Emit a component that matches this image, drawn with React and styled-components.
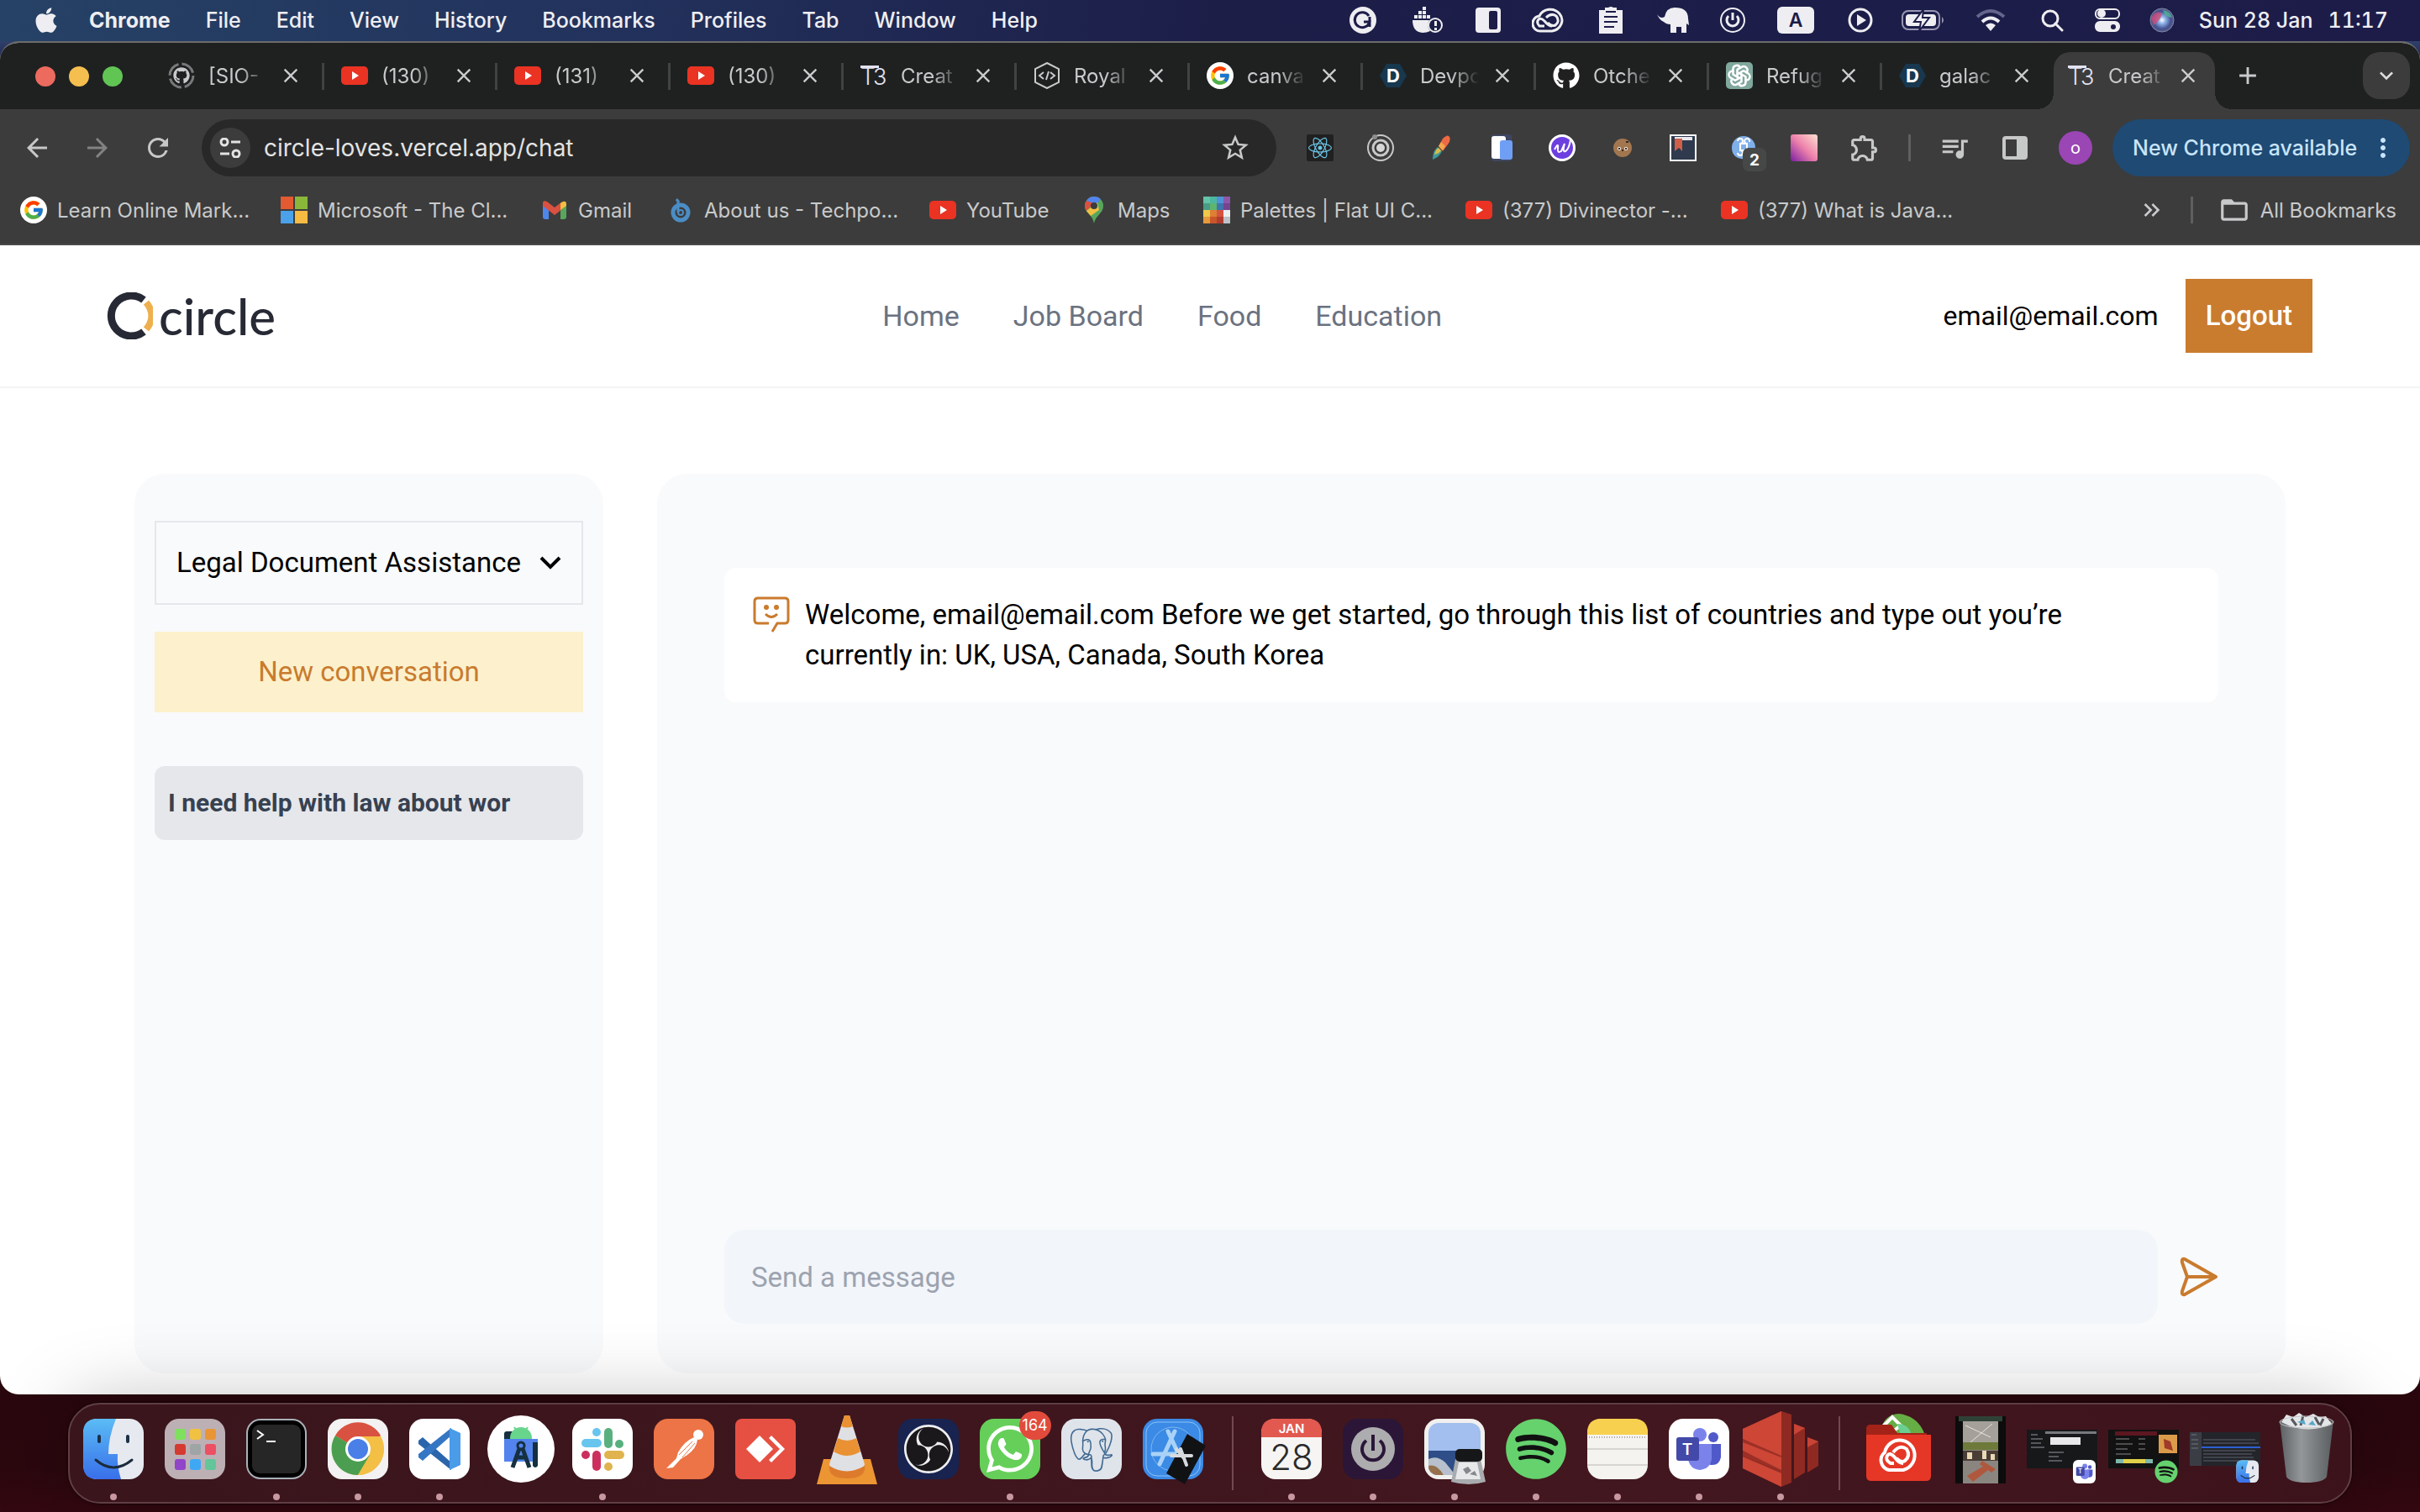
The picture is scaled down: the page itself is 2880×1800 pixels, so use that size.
import styled, { createGlobalStyle } from 'styled-components'
import { FaApple, FaGithub, FaReact, FaWhatsapp, FaSpotify } from 'react-icons/fa'
import { FcGoogle } from 'react-icons/fc'
import { SiPostgresql, SiObsstudio } from 'react-icons/si'
import { TbBrandOpenai } from 'react-icons/tb'
import {
  MdArrowBack,
  MdArrowForward,
  MdRefresh,
  MdStarOutline,
  MdMoreVert,
  MdClose,
  MdAdd,
  MdFolderOpen,
  MdQueueMusic,
  MdOutlineExtension,
  MdKeyboardArrowDown,
  MdKeyboardDoubleArrowRight,
} from 'react-icons/md'

const GlobalStyle = createGlobalStyle`
  * {
    box-sizing: border-box;
  }
  body {
    margin: 0;
    font-family: Inter, 'Noto Sans', sans-serif;
  }
  button, input, select {
    font: inherit;
    color: inherit;
    border: 0;
    padding: 0;
    margin: 0;
    background: none;
  }
  button {
    cursor: pointer;
  }
  a {
    color: inherit;
    text-decoration: none;
  }
  svg {
    display: block;
    flex: none;
  }
`

const Desktop = styled.div`
  min-height: 100vh;
  display: flex;
  flex-direction: column;
  background: linear-gradient(180deg, #4d78a8 0, #1c1d45 80px, #1c0509 60%, #2b070e 97%, #340810 100%);
`

/* menu bar */

const MenuBar = styled.header`
  height: 49px;
  padding: 0 38px 2px 38px;
  display: flex;
  align-items: center;
  justify-content: space-between;
  color: #eeeef2;
  font-size: 25px;
  font-weight: 500;
  white-space: nowrap;
  background: linear-gradient(90deg, #264266 0%, #22325c 25%, #1c1e48 50%, #1d1c49 100%);
`
const Menus = styled.nav`
  display: flex;
  align-items: center;
  gap: 42px;
`
const AppleMenu = styled.button`
  margin-right: -8px;
`
const MenuItem = styled.button`
  font-weight: ${props => (props.$bold ? 700 : 500)};
`
const StatusIcons = styled.div`
  display: flex;
  align-items: center;
`
const StatusIcon = styled.span`
  width: ${props => props.$w}px;
  display: flex;
  justify-content: center;
`
const Clock = styled.time`
  display: flex;
  gap: 18px;
  margin-left: 14px;
  font-variant-numeric: tabular-nums;
`

/* browser */

const Browser = styled.section`
  flex: 1;
  display: flex;
  flex-direction: column;
  overflow: hidden;
  border-top: 2px solid #6b6c6c;
  border-radius: 22px;
  background: #fff;
`
const TabStrip = styled.div`
  height: 79px;
  padding: 0 12px 0 42px;
  display: flex;
  align-items: flex-end;
  background: #1f2121;
`
const Lights = styled.div`
  height: 78px;
  width: 136px;
  display: flex;
  align-items: center;
  gap: 16px;
`
const Light = styled.span`
  width: 24px;
  height: 24px;
  border-radius: 50%;
  background: ${props => props.$color};
`
const Tab = styled.div`
  position: relative;
  flex: 0 1 ${props => (props.$active ? 192 : 206)}px;
  height: 68px;
  padding: 0 ${props => (props.$active ? '18px 12px 17px' : '24px 12px 22px')};
  display: flex;
  align-items: center;
  color: #c9cacb;
  font-size: 24px;
  background: ${props => (props.$active ? '#3c3c3c' : 'none')};
  border-radius: 20px 20px 0 0;

  &::before, &::after {
    content: '';
    display: ${props => (props.$active ? 'block' : 'none')};
    position: absolute;
    bottom: 0;
    width: 20px;
    height: 20px;
  }
  &::before {
    left: -20px;
    background: radial-gradient(circle at 0 0, transparent 20px, #3c3c3c 20px);
  }
  &::after {
    right: -20px;
    background: radial-gradient(circle at 100% 0, transparent 20px, #3c3c3c 20px);
  }
`
const TabTitle = styled.span`
  margin-left: 16px;
  width: 78px;
  margin-right: -14px;
  white-space: nowrap;
  mask-image: linear-gradient(90deg, #000 38px, transparent 70px);
`
const TabClose = styled.button`
  margin-left: auto;
`
const TabEdge = styled.span`
  position: absolute;
  right: -2px;
  top: 13px;
  width: 3px;
  height: 32px;
  background: #414343;
`
const NewTab = styled.button`
  height: 68px;
  padding: 0 0 12px 22px;
  color: #c9cacb;
`
const TabSearch = styled.button`
  width: 56px;
  height: 56px;
  margin: 0 0 12px auto;
  display: grid;
  place-items: center;
  border-radius: 20px;
  color: #dcdddd;
  background: #3c3c3c;
`
const Toolbar = styled.div`
  height: 92px;
  padding: 0 12px 0 24px;
  display: flex;
  align-items: center;
  gap: 32px;
  color: #c7c8c8;
  background: #3c3c3c;
`
const IconButton = styled.button`
  width: 40px;
  display: flex;
  justify-content: center;
  opacity: ${props => (props.disabled ? 0.5 : 1)};
`
const Omnibox = styled.label`
  flex: 1;
  height: 68px;
  padding: 0 30px 0 10px;
  display: flex;
  align-items: center;
  gap: 16px;
  border-radius: 34px;
  color: #c7c8c8;
  background: #282828;
`
const SiteInfo = styled.span`
  width: 48px;
  height: 48px;
  display: grid;
  place-items: center;
  border-radius: 50%;
  background: #3c3c3c;
`
const Address = styled.input`
  flex: 1;
  min-width: 0;
  outline: 0;
  color: #e3e3e3;
  font-size: 28px;
`
const Extensions = styled.div`
  display: flex;
  align-items: center;
  gap: 40px;
  padding: 0 4px;
`
const ExtButton = styled.button`
  width: 32px;
  height: 32px;
  display: flex;
  justify-content: ${props => (props.$badge ? 'flex-start' : 'center')};
  align-items: ${props => (props.$badge ? 'flex-start' : 'center')};
`
const Rule = styled.span`
  width: 3px;
  height: 32px;
  background: #5e5f5f;
`
const Account = styled.div`
  display: flex;
  align-items: center;
  gap: 24px;
`
const Avatar = styled.button`
  width: 40px;
  height: 40px;
  border-radius: 50%;
  color: #fff;
  font-size: 20px;
  line-height: 36px;
  background: #9a46b4;
`
const UpdateButton = styled.button`
  width: 354px;
  height: 68px;
  padding: 0 14px 0 24px;
  display: flex;
  align-items: center;
  justify-content: space-between;
  border-radius: 34px;
  color: #c8e4fb;
  font-size: 25px;
  font-weight: 500;
  white-space: nowrap;
  background: #1f4a73;
`
const Bookmarks = styled.nav`
  height: 70px;
  padding: 0 28px 12px 24px;
  display: flex;
  align-items: center;
  gap: 42px;
  color: #c9cacb;
  font-size: 24px;
  background: #3c3c3c;
  border-bottom: 2px solid #4a4848;
`
const Bookmark = styled.a`
  display: flex;
  align-items: center;
  gap: 12px;
  white-space: nowrap;
`
const BookmarkText = styled.span`
  width: ${props => props.$w}px;
`
const BookmarksEnd = styled.div`
  margin-left: auto;
  display: flex;
  align-items: center;
  gap: 30px;
`

/* circle site */

const Site = styled.div`
  flex: 1;
  display: flex;
  flex-direction: column;
  color: #000;
  font-family: Roboto, 'Noto Sans', sans-serif;
  font-size: 33px;
  line-height: 48px;
`
const SiteHeader = styled.header`
  height: 170px;
  padding: 0 128px 0 126px;
  display: flex;
  align-items: center;
  justify-content: space-between;
  border-bottom: 2px solid #f3f4f6;
`
const Logo = styled.a`
  width: 328px;
  display: flex;
  align-items: center;
  gap: 7px;
  color: #272a35;
  font-family: Lato, sans-serif;
  font-size: 60px;
  font-weight: 500;
`
const SiteNav = styled.nav`
  display: flex;
  gap: 64px;
  color: #6b7280;
  font-size: 34px;
`
const Session = styled.div`
  display: flex;
  align-items: center;
  gap: 32px;
`
const Email = styled.span`
  font-size: 32px;
`
const Logout = styled.button`
  height: 88px;
  padding: 0 24px;
  color: #fff;
  font-weight: 500;
  background: #c97b2e;
`
const Main = styled.main`
  flex: 1;
  padding: 102px 160px 25px;
  display: flex;
  gap: 64px;
`
const Sidebar = styled.aside`
  width: 558px;
  padding: 56px 24px;
  display: flex;
  flex-direction: column;
  border-radius: 36px;
  background: #f9fafc;
`
const TopicPicker = styled.label`
  height: 100px;
  padding: 0 24px;
  display: flex;
  align-items: center;
  border: 2px solid #e5e7eb;
`
const TopicSelect = styled.select`
  flex: 1;
  min-width: 0;
  appearance: none;
  outline: 0;
  height: 60px;
`
const NewConversation = styled.button`
  height: 96px;
  margin-top: 32px;
  color: #c97b2e;
  background: #fcf1cc;
`
const Conversation = styled.button`
  height: 88px;
  margin-top: 64px;
  padding: 0 16px;
  border-radius: 12px;
  color: #374151;
  font-size: 30px;
  font-weight: 700;
  text-align: left;
  background: #e5e7eb;
`
const Chat = styled.section`
  flex: 1;
  padding: 112px 80px 59px;
  display: flex;
  flex-direction: column;
  justify-content: space-between;
  border-radius: 36px;
  background: #f9fafc;
`
const Message = styled.article`
  padding: 32px;
  display: flex;
  gap: 16px;
  border-radius: 14px;
  background: #fff;

  p {
    margin: 0;
  }
`
const Composer = styled.form`
  display: flex;
  align-items: center;
  gap: 24px;
`
const MessageInput = styled.input`
  flex: 1;
  height: 112px;
  padding: 0 32px;
  border-radius: 24px;
  background: #f2f5fa;

  &::placeholder {
    color: #9ca3af;
    opacity: 1;
  }
`

/* dock */

const DockArea = styled.footer`
  padding: 10px 81px;
`
const Dock = styled.div`
  position: relative;
  height: 120px;
  padding: 0 4px;
  display: flex;
  border: 2px solid #603d44;
  border-radius: 38px;
  background: linear-gradient(90deg, #3a151c, #43171f 70%, #3d131b);
  box-shadow: 0 0 3px #000, 0 0 90px rgba(0, 0, 0, 0.26);
`
const DockGroup = styled.div`
  display: contents;
`
const DockApp = styled.button`
  position: relative;
  flex: 1;
  min-width: 0;
  padding-top: 5px;
  display: flex;
  flex-direction: column;
  align-items: center;
  gap: 5px;
`
const RunningDot = styled.span`
  width: 8px;
  height: 8px;
  border-radius: 50%;
  background: #c898a1;
`
const DockLine = styled.span`
  width: 2px;
  height: 88px;
  margin: 14px 21px;
  background: #74484f;
`
const Badge = styled.span`
  position: absolute;
  top: 8px;
  right: 0;
  width: 38px;
  height: 34px;
  border-radius: 17px;
  color: #fff;
  font-size: 18px;
  line-height: 34px;
  background: #e24b3c;
`

/* small icons */

const GoogleIcon = () => (
  <svg width="32" height="32" viewBox="0 0 32 32">
    <circle cx="16" cy="16" r="16" fill="#fff" />
    <FcGoogle x="3" y="3" size={26} />
  </svg>
)
const YouTubeIcon = () => (
  <svg width="32" height="32" viewBox="0 0 32 32">
    <rect y="5" width="32" height="22" rx="5" fill="#ea3323" />
    <path d="M13 11l8 5-8 5z" fill="#fff" />
  </svg>
)
const GithubRing = () => (
  <svg width="32" height="32" viewBox="0 0 32 32" fill="none">
    <circle cx="16" cy="16" r="14" stroke="#77797a" strokeWidth="3" strokeDasharray="18 4" />
    <FaGithub x="6" y="6" size={20} color="#c9cacb" />
  </svg>
)
const T3Icon = () => (
  <svg width="32" height="32" viewBox="0 0 32 32" fill="#e3e3f3">
    <path d="M0 4h22v3H0z" />
    <text x="0" y="27" fontFamily="Inter" fontSize="28" fontWeight="300">T</text>
    <text x="15" y="27" fontFamily="Inter" fontSize="27" fontWeight="300">3</text>
  </svg>
)
const RoyalIcon = () => (
  <svg width="32" height="32" viewBox="0 0 32 32" fill="none" stroke="#c9cacb" strokeWidth="2">
    <path d="M16 1l14 7v16l-14 7-14-7V8zM12 12l-5 4 5 4M20 12l5 4-5 4M15 21l3-10" />
  </svg>
)
const DevpostIcon = () => (
  <svg width="32" height="32" viewBox="0 0 32 32">
    <path d="M8 2h16l8 14-8 14H8L0 16z" fill="#17384f" />
    <text x="16" y="24" textAnchor="middle" fontFamily="Inter" fontSize="22" fontWeight="700" fill="#fff">D</text>
  </svg>
)
const OpenAiIcon = () => (
  <svg width="32" height="32" viewBox="0 0 32 32">
    <rect width="32" height="32" rx="5" fill="#80a89c" />
    <TbBrandOpenai x="1" y="1" size={30} color="#fff" />
  </svg>
)
const MicrosoftIcon = () => (
  <svg width="32" height="32" viewBox="0 0 32 32">
    <path d="M0 0h15v15H0z" fill="#e25a32" />
    <path d="M17 0h15v15H17z" fill="#8ab73a" />
    <path d="M0 17h15v15H0z" fill="#4ba2ea" />
    <path d="M17 17h15v15H17z" fill="#f6bb43" />
  </svg>
)
const GmailIcon = () => (
  <svg width="32" height="32" viewBox="0 0 32 32">
    <path d="M2 10v14q0 3 3 3h4V13z" fill="#4f86ec" />
    <path d="M30 10v14q0 3-3 3h-4V13z" fill="#58a65c" />
    <path d="M2 8q0-4 5-2l9 7 9-7v9l-9 7-9-7-5-4z" fill="#d95140" />
    <path d="M23 8l3-2q4-1 4 3v2l-7 5z" fill="#f1bf42" />
  </svg>
)
const TechpointIcon = () => (
  <svg width="32" height="32" viewBox="0 0 32 32" fill="none" stroke="#4b8dc5">
    <circle cx="16" cy="19" r="9" strokeWidth="5" />
    <circle cx="16" cy="19" r="3" strokeWidth="2" />
    <path d="M13 19V6M11 3l3 4" strokeWidth="3" />
  </svg>
)
const MapsIcon = () => (
  <svg width="32" height="32" viewBox="0 0 32 32">
    <path d="M16 0a11 11 0 0 1 11 11c0 9-9 11-11 21C14 21 5 20 5 11A11 11 0 0 1 16 0z" fill="#58a65c" />
    <path d="M16 0A11 11 0 0 0 7 5l9 8 8-10a11 11 0 0 0-8-3z" fill="#5383ec" />
    <path d="M7 5q-4 6 0 12l9-9z" fill="#d95140" />
    <path d="M7 17l13-10 2 9-10 7z" fill="#f1bf42" />
    <circle cx="16" cy="11" r="4" fill="#3c3c3c" />
  </svg>
)
const paletteColors = [
  '#65c3a6', '#4bb7a0', '#4f93d4', '#8c57a9',
  '#4a9c86', '#5db56e', '#3f76ad', '#76438f',
  '#efc94c', '#dd7f34', '#d5543f', '#ecf0f1',
  '#e79a3b', '#c9562a', '#b23d2f', '#bdc3c7',
]
const PaletteIcon = () => (
  <svg width="32" height="32" viewBox="0 0 32 32">
    {paletteColors.map((color, i) => (
      <rect key={i} x={(i % 4) * 8} y={Math.floor(i / 4) * 8} width="8" height="8" fill={color} />
    ))}
  </svg>
)

const tabs = [
  { title: '[SIO-', icon: <GithubRing /> },
  { title: '(130)', icon: <YouTubeIcon /> },
  { title: '(131)', icon: <YouTubeIcon /> },
  { title: '(130)', icon: <YouTubeIcon /> },
  { title: 'Creat', icon: <T3Icon /> },
  { title: 'Royal', icon: <RoyalIcon /> },
  { title: 'canva', icon: <GoogleIcon /> },
  { title: 'Devpo', icon: <DevpostIcon /> },
  { title: 'Otche', icon: <FaGithub size={32} color="#fff" /> },
  { title: 'Refug', icon: <OpenAiIcon /> },
  { title: 'galac', icon: <DevpostIcon /> },
  { title: 'Creat', icon: <T3Icon />, active: true },
]

const bookmarks = [
  { text: 'Learn Online Mark...', w: 224, icon: <GoogleIcon /> },
  { text: 'Microsoft - The Cl...', w: 224, icon: <MicrosoftIcon /> },
  { text: 'Gmail', w: 64, icon: <GmailIcon /> },
  { text: 'About us - Techpo...', w: 226, icon: <TechpointIcon /> },
  { text: 'YouTube', w: 94, icon: <YouTubeIcon /> },
  { text: 'Maps', w: 60, icon: <MapsIcon /> },
  { text: 'Palettes | Flat UI C...', w: 226, icon: <PaletteIcon /> },
  { text: '(377) Divinector -...', w: 218, icon: <YouTubeIcon /> },
  { text: '(377) What is Java...', w: 230, icon: <YouTubeIcon /> },
]

const extensions = [
  {
    name: 'React Developer Tools',
    icon: (
      <svg width="32" height="32" viewBox="0 0 32 32">
        <rect width="32" height="32" rx="2" fill="#202020" />
        <FaReact x="2" y="2" size={28} color="#6cc5e8" />
      </svg>
    ),
  },
  {
    name: 'Orbit',
    icon: (
      <svg width="32" height="32" viewBox="0 0 32 32" fill="none" stroke="#c7c8c8" strokeWidth="2">
        <circle cx="16" cy="16" r="15" />
        <circle cx="16" cy="16" r="9" strokeWidth="3" />
        <circle cx="16" cy="16" r="5" fill="#d6d6d6" stroke="none" />
        <circle cx="9" cy="3" r="3" fill="#8c8d8d" stroke="none" />
      </svg>
    ),
  },
  {
    name: 'Brush',
    icon: (
      <svg width="32" height="32" viewBox="0 0 32 32">
        <path d="M6 30q0-11 6-15l5 5q-3 7-11 10z" fill="#3e9a9a" />
        <path d="M8 24q2-7 5-8l3 3q-2 4-8 5z" fill="#d6b94b" />
        <path d="M13 14l5-9q6-6 8-2t-2 9l-6 8z" fill="#ee6a45" />
        <path d="M13 14l3-5 5 5-3 5z" fill="#f3a64a" />
      </svg>
    ),
  },
  {
    name: 'Devices',
    icon: (
      <svg width="32" height="32" viewBox="0 0 32 32">
        <rect x="4" y="0" width="24" height="32" rx="3" fill="#3f4660" />
        <rect x="4" y="2" width="17" height="27" rx="3" fill="#fff" />
        <rect x="14" y="7" width="15" height="23" rx="3" fill="#6f9ff5" />
      </svg>
    ),
  },
  {
    name: 'Writer',
    icon: (
      <svg width="32" height="32" viewBox="0 0 32 32">
        <circle cx="16" cy="16" r="16" fill="#fff" />
        <circle cx="16" cy="16" r="13" fill="#6d3fe0" />
        <path d="M7 18q5-9 4-2t4 4l4-9q-3 11 1 9t6-13" fill="none" stroke="#fff" strokeWidth="2" />
      </svg>
    ),
  },
  {
    name: 'Cookies',
    icon: (
      <svg width="32" height="32" viewBox="0 0 32 32">
        <circle cx="16" cy="16" r="11" fill="#a27750" />
        <circle cx="12" cy="17" r="2" fill="#fff" />
        <circle cx="20" cy="17" r="2" fill="#fff" />
        <path d="M12 16v2M20 16v2M15 19h2M20 9h3" stroke="#3a261a" strokeWidth="2" />
      </svg>
    ),
  },
  {
    name: 'Reading list',
    icon: (
      <svg width="32" height="32" viewBox="0 0 32 32">
        <rect x="1" y="1" width="30" height="30" fill="#2f3a4e" stroke="#fff" strokeWidth="2" />
        <path d="M6 3h21v4H6z" fill="#e9e9ee" />
        <path d="M6 5h9v15l-4-4-5 4z" fill="#cf5f49" />
      </svg>
    ),
  },
  {
    name: 'Shortcuts',
    badge: true,
    icon: (
      <svg width="44" height="44" viewBox="0 0 44 44">
        <path d="M2 16a14 14 0 0 1 28 0q0 8-8 11-9 5-16-1-4-4-4-10z" fill="#7fb0ea" />
        <path d="M12 19h8v-8h-8zM12 11a3 3 0 1 0-3-3M20 11a3 3 0 1 1 3-2M12 19a3 3 0 1 1-3 3" fill="none" stroke="#fff" strokeWidth="2" />
        <rect x="15" y="16" width="28" height="28" rx="7" fill="#464848" />
        <text x="29" y="37" textAnchor="middle" fontFamily="Inter" fontSize="19" fontWeight="700" fill="#fff">2</text>
      </svg>
    ),
  },
  {
    name: 'Gradients',
    icon: (
      <svg width="32" height="32" viewBox="0 0 32 32">
        <defs>
          <linearGradient id="pinks" x1="0" y1="1" x2="1" y2="0">
            <stop offset="0" stopColor="#7b1fa2" />
            <stop offset="0.5" stopColor="#ee82ab" />
            <stop offset="1" stopColor="#fde2d0" />
          </linearGradient>
        </defs>
        <rect width="32" height="32" rx="3" fill="url(#pinks)" />
      </svg>
    ),
  },
  { name: 'Extensions', icon: <MdOutlineExtension size={38} /> },
]

const statusIcons = [
  {
    name: 'Grammarly',
    w: 78,
    icon: (
      <svg width="32" height="32" viewBox="0 0 32 32">
        <circle cx="16" cy="16" r="16" fill="#eeeef2" />
        <path d="M23 11a9 9 0 1 0 1 7h-7M24 12v12" fill="none" stroke="#1d1c49" strokeWidth="3" />
      </svg>
    ),
  },
  {
    name: 'Docker',
    w: 76,
    icon: (
      <svg width="40" height="32" viewBox="0 0 40 32" fill="#eeeef2">
        <path d="M2 16h20q-4 7 1 13-4 2-9 2Q2 30 2 16zM4 10h4v4H4zM9 10h4v4H9zM14 10h4v4h-4zM9 5h4v4H9zM14 5h4v4h-4zM14 0h4v4h-4zM19 10h4v4h-4z" />
        <circle cx="29" cy="22" r="8" fill="none" stroke="#eeeef2" strokeWidth="2" />
        <path d="M28 17h3v6h-3zM28 25h3v3h-3z" />
      </svg>
    ),
  },
  {
    name: 'Panels',
    w: 68,
    icon: (
      <svg width="30" height="30" viewBox="0 0 30 30">
        <rect width="30" height="30" rx="4" fill="#eeeef2" />
        <rect x="16" y="4" width="10" height="22" rx="2" fill="#1d1c49" />
      </svg>
    ),
  },
  {
    name: 'Creative Cloud',
    w: 74,
    icon: (
      <svg width="38" height="30" viewBox="0 0 38 30" fill="none" stroke="#eeeef2" strokeWidth="3">
        <path d="M11 28a9 9 0 0 1-2-18A14 13 0 1 1 24 28z" />
        <path d="M24 22q-4 0-9-6-4-4-7-2-3 4 1 8h6M17 12q6-6 12-2 5 6-1 11-5 2-9-3" />
      </svg>
    ),
  },
  {
    name: 'Clipboard',
    w: 76,
    icon: (
      <svg width="28" height="32" viewBox="0 0 28 32">
        <path d="M0 4h7V1h4q3-2 6 0h4v3h7v28H0z" fill="#eeeef2" />
        <path d="M6 12h16M6 18h16M6 24h12M8 6h12" stroke="#1d1c49" strokeWidth="2" />
      </svg>
    ),
  },
  {
    name: 'TablePlus',
    w: 72,
    icon: (
      <svg width="40" height="32" viewBox="0 0 40 32" fill="#eeeef2">
        <path d="M1 9q4 6 9 3Q12 1 22 1q16 0 16 13l1 8-3-2v11h-6v-7h-6v7h-7V21q-5 0-8-3-5-2-8-9z" />
      </svg>
    ),
  },
  {
    name: 'Power',
    w: 70,
    icon: (
      <svg width="32" height="32" viewBox="0 0 32 32" fill="none" stroke="#eeeef2" strokeWidth="3">
        <circle cx="16" cy="16" r="14" strokeWidth="2" />
        <path d="M16 7v9M11 11a7 7 0 1 0 10 0" />
      </svg>
    ),
  },
  {
    name: 'Input source',
    w: 80,
    icon: (
      <svg width="44" height="32" viewBox="0 0 44 32">
        <rect width="44" height="32" rx="6" fill="#eeeef2" />
        <text x="22" y="24" textAnchor="middle" fontFamily="Inter" fontSize="23" fontWeight="600" fill="#1d1c49">A</text>
      </svg>
    ),
  },
  {
    name: 'Now playing',
    w: 74,
    icon: (
      <svg width="30" height="30" viewBox="0 0 30 30" fill="#eeeef2">
        <circle cx="15" cy="15" r="13" fill="none" stroke="#eeeef2" strokeWidth="3" />
        <path d="M11 8l11 7-11 7z" />
      </svg>
    ),
  },
  {
    name: 'Battery',
    w: 76,
    icon: (
      <svg width="52" height="28" viewBox="0 0 52 28">
        <rect x="1" y="3" width="44" height="22" rx="7" fill="none" stroke="#9796b4" strokeWidth="2" />
        <path d="M48 10q4 4 0 8z" fill="#9796b4" />
        <rect x="5" y="7" width="36" height="14" rx="4" fill="#eeeef2" />
        <path d="M26 1L15 16h8l-2 11 12-16h-8z" fill="#eeeef2" stroke="#1d1c49" strokeWidth="2" />
      </svg>
    ),
  },
  {
    name: 'Wi-Fi',
    w: 84,
    icon: (
      <svg width="36" height="28" viewBox="0 0 36 28" fill="none" strokeWidth="4">
        <path d="M2 10q16-14 32 0" stroke="#65648d" />
        <path d="M8 16q10-9 20 0" stroke="#eeeef2" />
        <path d="M12 20q6-5 12 0l-6 7z" fill="#eeeef2" />
      </svg>
    ),
  },
  {
    name: 'Search',
    w: 62,
    icon: (
      <svg width="28" height="28" viewBox="0 0 28 28" fill="none" stroke="#eeeef2" strokeWidth="3">
        <circle cx="12" cy="12" r="9" />
        <path d="M18 18l8 8" strokeLinecap="round" />
      </svg>
    ),
  },
  {
    name: 'Control Center',
    w: 70,
    icon: (
      <svg width="30" height="28" viewBox="0 0 30 28" fill="none" stroke="#eeeef2" strokeWidth="2">
        <rect x="1" y="1" width="28" height="11" rx="5" />
        <circle cx="8" cy="6" r="4" fill="#eeeef2" />
        <rect x="1" y="16" width="28" height="11" rx="5" fill="#eeeef2" />
        <circle cx="22" cy="22" r="4" fill="#1d1c49" />
      </svg>
    ),
  },
  {
    name: 'Siri',
    w: 60,
    icon: (
      <svg width="30" height="30" viewBox="0 0 30 30">
        <defs>
          <radialGradient id="siri">
            <stop offset="0" stopColor="#fff" />
            <stop offset="0.3" stopColor="#8fb4ea" />
            <stop offset="0.75" stopColor="#44508f" />
            <stop offset="1" stopColor="#5a5c86" />
          </radialGradient>
        </defs>
        <circle cx="15" cy="15" r="14" fill="url(#siri)" stroke="#7d87a8" />
        <path d="M2 13q5-11 13-6-2 9-10 14z" fill="#d04e79" opacity="0.8" />
        <path d="M16 3q9 1 11 9l-8-2z" fill="#4fb596" opacity="0.8" />
      </svg>
    ),
  },
]

/* dock drawings, all on a 96 grid with a 72 tile in the middle */

const Tile = ({ fill, children }) => (
  <svg width="96" height="96" viewBox="0 0 96 96">
    <rect x="12" y="12" width="72" height="72" rx="17" fill={fill} />
    {children}
  </svg>
)

const FinderFace = () => (
  <g>
    <path d="M29 12h22q-9 22-9 42h11q-1 14 4 30H29q-17 0-17-17V29q0-17 17-17z" fill="url(#finder)" />
    <path d="M31 33v6M65 33v6" stroke="#1c3048" strokeWidth="4" strokeLinecap="round" />
    <path d="M27 61q21 18 43 0" fill="none" stroke="#1c2b3c" strokeWidth="3" strokeLinecap="round" />
  </g>
)
const Finder = () => (
  <Tile fill="#e6eaf0">
    <defs>
      <linearGradient id="finder" x1="0" y1="0" x2="0" y2="1">
        <stop offset="0" stopColor="#5bbcf5" />
        <stop offset="1" stopColor="#386fea" />
      </linearGradient>
    </defs>
    <FinderFace />
  </Tile>
)
const pads = ['#7fe05d', '#f1c141', '#ea9535', '#d53a30', '#9fa4a6', '#ee5063', '#9145c9', '#3fa8f5', '#63c59a']
const Launchpad = () => (
  <Tile fill="#bdb0b5">
    {pads.map((color, i) => (
      <rect key={color} x={24 + (i % 3) * 18} y={24 + Math.floor(i / 3) * 18} width="13" height="13" rx="3" fill={color} />
    ))}
  </Tile>
)
const Terminal = () => (
  <Tile fill="#a9b1b8">
    <rect x="14" y="14" width="68" height="68" rx="15" fill="#000" />
    <rect x="19" y="19" width="58" height="58" rx="9" fill="#262626" />
    <path d="M25 26l7 5-7 5M36 39h11" fill="none" stroke="#fff" strokeWidth="2" />
  </Tile>
)
const Chrome = () => (
  <Tile fill="#f3f1f1">
    <circle cx="48" cy="48" r="31" fill="#f3bf45" />
    <path d="M48 48L21 32a31 31 0 0 1 54 0z" fill="#d95140" />
    <path d="M21 32a31 31 0 0 0 27 47l14-23-14-8z" fill="#4b9e50" />
    <path d="M48 33h27a31 31 0 0 1-27 46l14-24z" fill="#f3bf45" />
    <circle cx="48" cy="48" r="15" fill="#fff" />
    <circle cx="48" cy="48" r="12" fill="#4a7fe8" />
  </Tile>
)
const VsCode = () => (
  <Tile fill="#fff">
    <path d="M23 38l5-4 34 30v9L23 42z" fill="#2b66ac" />
    <path d="M23 58l5 4 34-30v-9L23 54z" fill="#3576c4" />
    <path d="M60 23l13 6v38l-13 6z" fill="#4a9be8" />
  </Tile>
)
const AndroidStudio = () => (
  <svg width="96" height="96" viewBox="0 0 96 96">
    <circle cx="48" cy="48" r="40" fill="#fff" />
    <rect x="28" y="27" width="12" height="14" rx="3" fill="#15303f" />
    <path d="M28 36h40v27H28z" fill="#5383ec" />
    <path d="M36 35a12 12 0 0 1 24 0zM40 22l3 5M56 22l-3 5" fill="#68d58d" stroke="#68d58d" strokeWidth="2" />
    <path d="M62 40h6v28q-3 4-6 0z" fill="#15303f" />
    <path d="M48 42L38 70M48 42l10 28M41 58h14" fill="none" stroke="#15303f" strokeWidth="5" />
    <circle cx="48" cy="44" r="4" fill="#5383ec" stroke="#15303f" strokeWidth="3" />
  </svg>
)
const Slack = () => (
  <Tile fill="#fff">
    <g strokeWidth="10" strokeLinecap="round">
      <path d="M55 28v14" stroke="#59b07f" />
      <path d="M68 42h0" stroke="#59b07f" />
      <path d="M28 41h14" stroke="#68c5ee" />
      <path d="M41 28h0" stroke="#68c5ee" />
      <path d="M41 55v14" stroke="#cc2f5e" />
      <path d="M28 55h0" stroke="#cc2f5e" />
      <path d="M55 55h14" stroke="#e0b34e" />
      <path d="M55 69h0" stroke="#e0b34e" />
    </g>
  </Tile>
)
const Postman = () => (
  <Tile fill="#ed7446">
    <circle cx="65" cy="31" r="6" fill="#fff" />
    <path d="M60 34q-12 5-19 18l-2 7-12 12 8-1 9-10 8-5q11-8 12-18z" fill="#fff" />
    <path d="M58 39L42 55M61 41L46 58" stroke="#ed7446" strokeWidth="1" />
  </Tile>
)
const AnyDesk = () => (
  <svg width="96" height="96" viewBox="0 0 96 96">
    <rect x="12" y="12" width="72" height="72" rx="8" fill="#e65042" />
    <path d="M41 32l16 16-16 16-16-16zM55 32l16 16-16 16-3-3 13-13-13-13z" fill="#fff" />
  </svg>
)
const Vlc = () => (
  <svg width="96" height="96" viewBox="0 0 96 96">
    <path d="M20 60h56l8 30H12z" fill="#ec9533" />
    <path d="M45 8h6l18 58q-3 16-21 16T27 66z" fill="#dfe0e4" />
    <path d="M45 8h6l4 13q-7 3-14 0zM37 35q11 6 22 0l5 16q-16 10-32 0z" fill="#ea9133" />
    <path d="M27 68q21 13 42 0 2 15-21 15T27 68z" fill="#dd7b2c" />
  </svg>
)
const Obs = () => (
  <Tile fill="#182350">
    <circle cx="48" cy="48" r="28" fill="#1a181b" />
    <SiObsstudio x="19" y="19" size={58} color="#eeeef0" />
  </Tile>
)
const WhatsApp = () => (
  <Tile fill="#66cf5a">
    <FaWhatsapp x="16" y="16" size={64} color="#fff" />
  </Tile>
)
const Postgres = () => (
  <Tile fill="#dfe4ea">
    <SiPostgresql x="22" y="23" size={52} color="#416a93" />
  </Tile>
)
const Simulator = () => (
  <Tile fill="#3b8ae6">
    <rect x="16" y="16" width="64" height="64" rx="13" fill="none" stroke="#8ec3f5" strokeWidth="1" />
    <circle cx="48" cy="48" r="26" fill="none" stroke="#7fb6f0" strokeWidth="1" />
    <path d="M50 27L32 66M42 27l18 39M24 54h46" fill="none" stroke="#a9d2f8" strokeWidth="5" strokeLinecap="round" />
    <path d="M65 30l22 14-25 46-22-13z" fill="#111214" />
    <path d="M52 48l8 10M57 48l7 19M46 56l24 0" stroke="#d6dade" strokeWidth="4" strokeLinecap="round" />
  </Tile>
)
const Calendar = () => (
  <Tile fill="#f6f5f3">
    <path d="M29 12h38q17 0 17 17v5H12v-5q0-17 17-17z" fill="#e2594f" />
    <text x="48" y="29" textAnchor="middle" fontFamily="Inter" fontSize="15" fontWeight="600" fill="#fff">JAN</text>
    <text x="48" y="73" textAnchor="middle" fontFamily="Inter" fontSize="42" fontWeight="300" fill="#2a2a2a">28</text>
  </Tile>
)
const Power = () => (
  <Tile fill="#2b1638">
    <circle cx="48" cy="48" r="26" fill="#adadaf" />
    <path d="M48 31v19M40 38a13 13 0 1 0 16 0" fill="none" stroke="#2b1638" strokeWidth="4" />
  </Tile>
)
const Preview = () => (
  <Tile fill="#f1f0ee">
    <rect x="17" y="17" width="62" height="62" rx="12" fill="#a2bff0" />
    <path d="M17 50h62v17q0 12-12 12H29q-12 0-12-12z" fill="#2f4d86" />
    <path d="M17 60q10-5 20 4l12 15H29q-12 0-12-12z" fill="#b7c0cc" />
    <path d="M17 68q10-3 18 11h-8q-10-2-10-11z" fill="#96704c" />
    <path d="M49 60h30l6 27q-20 6-41 0z" fill="#a9acaf" />
    <path d="M53 64h22l4 20H49z" fill="#e6e8e9" />
    <path d="M58 72l6-3 4 5-6 4zM66 78l6-4 3 6z" fill="#84888c" />
    <rect x="49" y="48" width="32" height="15" rx="5" fill="#161718" />
  </Tile>
)
const Spotify = () => (
  <svg width="96" height="96" viewBox="0 0 96 96">
    <circle cx="48" cy="48" r="34" fill="#111" />
    <FaSpotify x="11" y="11" size={74} color="#65d26e" />
  </svg>
)
const Notes = () => (
  <Tile fill="#f4f3ef">
    <path d="M29 12h38q17 0 17 17v2H12v-2q0-17 17-17z" fill="#f8d04f" />
    <path d="M12 48h72M12 67h72" stroke="#d6d5d1" strokeWidth="2" />
    <path d="M14 34h68" stroke="#aaa9a5" strokeWidth="2" strokeDasharray="1 2" />
  </Tile>
)
const TeamsShape = () => (
  <g>
    <circle cx="49" cy="31" r="8" fill="#7b83eb" />
    <circle cx="65" cy="34" r="6" fill="#5059c9" />
    <path d="M57 42h17v16q-2 9-10 9t-7-9z" fill="#5059c9" />
    <path d="M35 42h28v18q-2 12-14 13-12-1-14-13z" fill="#7b83eb" />
    <rect x="21" y="34" width="27" height="28" rx="3" fill="#4349a9" />
    <text x="34" y="55" textAnchor="middle" fontFamily="Inter" fontSize="19" fontWeight="600" fill="#fff">T</text>
  </g>
)
const Teams = () => (
  <Tile fill="#fff">
    <TeamsShape />
  </Tile>
)
const RedStack = () => (
  <svg width="96" height="96" viewBox="0 0 96 96">
    <path d="M49 3l12 4v81l-12 5z" fill="#8f2a22" />
    <path d="M49 3L3 24v12l46 22v17L3 57v14l46 22V76z" fill="#9c3026" />
    <path d="M49 3v38L3 24zM3 24l46 17v17L3 36zM3 38l46 20v17L3 50zM3 57l46 20v16L3 71z" fill="#cd4636" />
    <path d="M3 50v7l46 18v-2zM3 36v4l46 18v-2z" fill="#9c3026" />
    <path d="M64 18l13 5v53l-13 8zM80 34l13 5v29l-13 8z" fill="#8f2a22" />
    <path d="M64 18l13 5-13 8zM80 34l13 5-13 7z" fill="#c84435" />
  </svg>
)
const CreativeFolder = () => (
  <svg width="96" height="96" viewBox="0 0 96 96">
    <path d="M24 30Q30 6 48 6q30 4 34 40H40z" fill="#67ad45" />
    <path d="M30 20l10-10 10 10-8 6z" fill="none" stroke="#fff" strokeWidth="4" />
    <path d="M46 18q14 0 17 14H50z" fill="#6bcf92" />
    <path d="M9 24q0-5 5-5h25l7 10h35v20H9z" fill="#a32318" />
    <path d="M9 31h77v49q0 6-6 6H15q-6 0-6-6z" fill="#e63726" />
    <g fill="none" stroke="#fff" strokeWidth="4">
      <path d="M36 73a12 12 0 0 1-5-21 18 18 0 1 1 22 21z" />
      <path d="M53 65q-5 0-10-7-6-7-9-2t4 9h4M41 52q8-10 16-4 5 8-2 14-5 3-10-3" />
    </g>
  </svg>
)
const Photo = () => (
  <svg width="96" height="96" viewBox="0 0 96 96">
    <rect x="18" y="9" width="60" height="80" fill="#0c0c0c" />
    <path d="M22 9h52v6H22z" fill="#2f4136" />
    <path d="M27 15h42v74H27z" fill="#8b8580" />
    <path d="M27 15h42v32H27z" fill="#a5a19a" />
    <path d="M27 40h42v9H27z" fill="#6d7a3a" />
    <path d="M27 50h42v12H27z" fill="#4a3d35" />
    <path d="M30 20l30 14M62 18L36 40" stroke="#e6e3da" strokeWidth="1" />
    <path d="M50 62l16 10-5 4-14-10zM32 80l20-12 5 5-18 14z" fill="#b0583d" />
    <path d="M32 52h6v8h-6zM50 50h5v10h-5zM60 54h5v7h-5z" fill="#e8d9b5" />
  </svg>
)
const MiniTeams = () => (
  <svg width="96" height="96" viewBox="0 0 96 96">
    <path d="M6 25h84v46H6z" fill="#17181a" />
    <path d="M28 27h61v3H28z" fill="#77797c" />
    <path d="M34 34h36v9H34z" fill="#e8e8ea" />
    <path d="M11 31h8M11 36h14M11 41h12M11 46h16M32 52h18M32 57h12M32 62h16" stroke="#55575c" strokeWidth="2" />
    <rect x="61" y="61" width="27" height="28" rx="6" fill="#fff" />
    <g transform="translate(57 57) scale(0.37)"><TeamsShape /></g>
  </svg>
)
const MiniSpotify = () => (
  <svg width="96" height="96" viewBox="0 0 96 96">
    <path d="M6 25h84v46H6z" fill="#121212" />
    <path d="M14 27h50v5H14z" fill="#5c1720" />
    <path d="M66 31h22v22H66z" fill="#dc9b4a" />
    <path d="M72 36l8 3 3 11-10-3z" fill="#a03a2a" />
    <path d="M15 60h44v5H15z" fill="#7fb8ab" />
    <path d="M24 60h26v5H24z" fill="#e2d24a" />
    <path d="M15 36h16M15 42h20M15 48h14M15 54h18M42 36h8M42 42h8M42 48h8" stroke="#4d4d4f" strokeWidth="2" />
    <circle cx="75" cy="75" r="13" fill="#111" />
    <FaSpotify x="61" y="61" size={28} color="#65d26e" />
  </svg>
)
const MiniFinder = () => (
  <svg width="96" height="96" viewBox="0 0 96 96">
    <path d="M6 28h84v40H6z" fill="#23252b" />
    <path d="M6 28h14v40H6z" fill="#3b3d45" />
    <path d="M20 45h70v2H20z" fill="#2c5fd0" />
    <path d="M22 37h62M22 41h66M22 50h62M22 54h58M22 58h60M22 62h50" stroke="#5f636d" strokeWidth="1" />
    <path d="M8 31h6M8 37h8M8 42h8M8 47h8" stroke="#73767f" strokeWidth="1" />
    <g transform="translate(57 57) scale(0.37)">
      <rect x="12" y="12" width="72" height="72" rx="17" fill="#e6eaf0" />
      <FinderFace />
    </g>
  </svg>
)
const Trash = () => (
  <svg width="96" height="96" viewBox="0 0 96 96">
    <defs>
      <linearGradient id="bin">
        <stop offset="0" stopColor="#5d6164" />
        <stop offset="0.4" stopColor="#93979a" />
        <stop offset="1" stopColor="#595d60" />
      </linearGradient>
    </defs>
    <path d="M16 14h64l-8 67q-4 7-24 7t-24-7z" fill="url(#bin)" />
    <path d="M18 16l6-9 8 3 7-5 8 5 9-4 7 4 8-1 7 9q-30 14-60-2z" fill="#e5e6e8" />
    <path d="M30 12l6 8M44 8l-3 12M58 10l5 9M68 12l-4 8" stroke="#575b60" strokeWidth="3" />
    <path d="M37 16l8-3 2 6zM50 19l5-5 4 6z" fill="#5aa6c8" />
    <ellipse cx="48" cy="16" rx="32" ry="7" fill="none" stroke="#c4c7c9" />
  </svg>
)

const dockGroups = [
  [
    { name: 'Finder', icon: <Finder />, running: true },
    { name: 'Launchpad', icon: <Launchpad /> },
    { name: 'Terminal', icon: <Terminal />, running: true },
    { name: 'Google Chrome', icon: <Chrome />, running: true },
    { name: 'Visual Studio Code', icon: <VsCode />, running: true },
    { name: 'Android Studio', icon: <AndroidStudio /> },
    { name: 'Slack', icon: <Slack />, running: true },
    { name: 'Postman', icon: <Postman /> },
    { name: 'AnyDesk', icon: <AnyDesk /> },
    { name: 'VLC', icon: <Vlc /> },
    { name: 'OBS', icon: <Obs /> },
    { name: 'WhatsApp', icon: <WhatsApp />, running: true, badge: 164 },
    { name: 'Postgres', icon: <Postgres /> },
    { name: 'Simulator', icon: <Simulator /> },
  ],
  [
    { name: 'Calendar', icon: <Calendar />, running: true },
    { name: 'Power', icon: <Power />, running: true },
    { name: 'Preview', icon: <Preview />, running: true },
    { name: 'Spotify', icon: <Spotify />, running: true },
    { name: 'Notes', icon: <Notes />, running: true },
    { name: 'Teams', icon: <Teams />, running: true },
    { name: 'Redis', icon: <RedStack />, running: true },
  ],
  [
    { name: 'Creative Cloud Files', icon: <CreativeFolder /> },
    { name: 'Photo', icon: <Photo /> },
    { name: 'Teams window', icon: <MiniTeams /> },
    { name: 'Spotify window', icon: <MiniSpotify /> },
    { name: 'Finder window', icon: <MiniFinder /> },
    { name: 'Trash', icon: <Trash /> },
  ],
]

const menus = ['File', 'Edit', 'View', 'History', 'Bookmarks', 'Profiles', 'Tab', 'Window', 'Help']
const links = ['Home', 'Job Board', 'Food', 'Education']

function BrowserChrome() {
  return (
    <>
      <TabStrip>
        <Lights>
          <Light $color="#ec6a5e" />
          <Light $color="#f4bf4f" />
          <Light $color="#61c554" />
        </Lights>
        {tabs.map((tab, i) => (
          <Tab key={i} $active={tab.active}>
            {tab.icon}
            <TabTitle>{tab.title}</TabTitle>
            <TabClose aria-label="Close tab"><MdClose size={28} /></TabClose>
            {i < tabs.length - 2 && <TabEdge />}
          </Tab>
        ))}
        <NewTab aria-label="New tab"><MdAdd size={34} /></NewTab>
        <TabSearch aria-label="Search tabs"><MdKeyboardArrowDown size={32} /></TabSearch>
      </TabStrip>
      <Toolbar>
        <IconButton aria-label="Back"><MdArrowBack size={36} /></IconButton>
        <IconButton aria-label="Forward" disabled><MdArrowForward size={36} /></IconButton>
        <IconButton aria-label="Reload"><MdRefresh size={36} /></IconButton>
        <Omnibox>
          <SiteInfo>
            <svg width="26" height="24" viewBox="0 0 26 24" fill="none" stroke="#e3e3e3" strokeWidth="3">
              <circle cx="6" cy="5" r="4" />
              <path d="M14 5h11M1 19h11" />
              <circle cx="20" cy="19" r="4" />
            </svg>
          </SiteInfo>
          <Address aria-label="Address" defaultValue="circle-loves.vercel.app/chat" />
          <MdStarOutline size={38} />
        </Omnibox>
        <Extensions>
          {extensions.map(ext => (
            <ExtButton key={ext.name} aria-label={ext.name} $badge={ext.badge}>{ext.icon}</ExtButton>
          ))}
        </Extensions>
        <Rule />
        <IconButton aria-label="Media"><MdQueueMusic size={38} /></IconButton>
        <IconButton aria-label="Side panel">
          <svg width="30" height="30" viewBox="0 0 30 30" fill="none" stroke="#c7c8c8" strokeWidth="4">
            <rect x="2" y="3" width="26" height="24" rx="2" />
            <path d="M22 3v24" strokeWidth="10" />
          </svg>
        </IconButton>
        <Account>
          <Avatar>o</Avatar>
          <UpdateButton>New Chrome available <MdMoreVert size={36} /></UpdateButton>
        </Account>
      </Toolbar>
      <Bookmarks>
        {bookmarks.map(mark => (
          <Bookmark key={mark.text} href="#">
            {mark.icon}
            <BookmarkText $w={mark.w}>{mark.text}</BookmarkText>
          </Bookmark>
        ))}
        <BookmarksEnd>
          <MdKeyboardDoubleArrowRight size={32} />
          <Rule />
          <Bookmark href="#">
            <MdFolderOpen size={38} />
            All Bookmarks
          </Bookmark>
        </BookmarksEnd>
      </Bookmarks>
    </>
  )
}

function CircleSite() {
  return (
    <Site>
      <SiteHeader>
        <Logo href="#">
          <svg width="56" height="56" viewBox="0 0 56 56" fill="none" strokeWidth="8">
            <path d="M45 9A24 24 0 1 0 45 47" stroke="#272a35" strokeWidth="9" />
            <path d="M48 12q13 16 0 32" stroke="#eeb04f" />
          </svg>
          circle
        </Logo>
        <SiteNav>
          {links.map(link => (
            <a key={link} href="#">{link}</a>
          ))}
        </SiteNav>
        <Session>
          <Email>email@email.com</Email>
          <Logout>Logout</Logout>
        </Session>
      </SiteHeader>
      <Main>
        <Sidebar>
          <TopicPicker>
            <TopicSelect aria-label="Topic">
              <option>Legal Document Assistance</option>
            </TopicSelect>
            <svg width="26" height="18" viewBox="0 0 26 18" fill="none" stroke="#000" strokeWidth="4">
              <path d="M2 3l11 11L24 3" />
            </svg>
          </TopicPicker>
          <NewConversation>New conversation</NewConversation>
          <Conversation>I need help with law about wor</Conversation>
        </Sidebar>
        <Chat>
          <Message>
            <svg width="48" height="48" viewBox="0 0 48 48" fill="none" stroke="#c97b2e" strokeWidth="3">
              <path d="M21 34H8q-4 0-4-4V8q0-4 4-4h32q4 0 4 4v22q0 4-4 4h-9l-6 10" />
              <circle cx="18" cy="15" r="3" fill="#c97b2e" stroke="none" />
              <circle cx="30" cy="15" r="3" fill="#c97b2e" stroke="none" />
              <path d="M17 23q7 7 14 0" />
            </svg>
            <p>
              Welcome, email@email.com Before we get started, go through this list of countries and type out you’re
              <br />
              currently in: UK, USA, Canada, South Korea
            </p>
          </Message>
          <Composer onSubmit={e => e.preventDefault()}>
            <MessageInput aria-label="Message" placeholder="Send a message" />
            <button aria-label="Send">
              <svg width="48" height="48" viewBox="0 0 48 48" fill="none" stroke="#c97b2e" strokeWidth="4" strokeLinejoin="round">
                <path d="M8 3L45 24 8 45Q4 46 5 41L11 24 5 7Q4 2 8 3zM11 24h34" />
              </svg>
            </button>
          </Composer>
        </Chat>
      </Main>
    </Site>
  )
}

function App() {
  return (
    <Desktop>
      <GlobalStyle />
      <MenuBar>
        <Menus>
          <AppleMenu aria-label="Apple"><FaApple size={34} /></AppleMenu>
          <MenuItem $bold>Chrome</MenuItem>
          {menus.map(menu => (
            <MenuItem key={menu}>{menu}</MenuItem>
          ))}
        </Menus>
        <StatusIcons>
          {statusIcons.map(status => (
            <StatusIcon key={status.name} $w={status.w} title={status.name}>{status.icon}</StatusIcon>
          ))}
          <Clock>
            <span>Sun 28 Jan</span>
            <span>11:17</span>
          </Clock>
        </StatusIcons>
      </MenuBar>
      <Browser>
        <BrowserChrome />
        <CircleSite />
      </Browser>
      <DockArea>
        <Dock>
          {dockGroups.map((group, i) => (
            <DockGroup key={i}>
              {i > 0 && <DockLine />}
              {group.map(app => (
                <DockApp key={app.name} aria-label={app.name}>
                  {app.icon}
                  {app.badge && <Badge>{app.badge}</Badge>}
                  {app.running && <RunningDot />}
                </DockApp>
              ))}
            </DockGroup>
          ))}
        </Dock>
      </DockArea>
    </Desktop>
  )
}

export default App
